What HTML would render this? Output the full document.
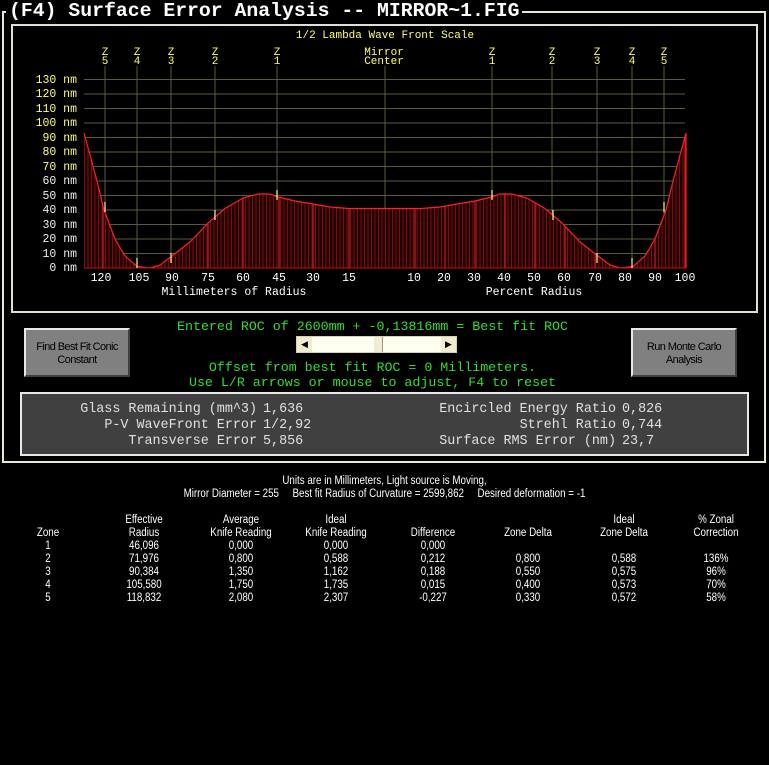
<!DOCTYPE html>
<html><head><meta charset="utf-8">
<style>
html,body{margin:0;padding:0;background:#000;width:769px;height:765px;overflow:hidden;position:relative}
.a{position:absolute;white-space:nowrap}
.mono{font-family:"Liberation Mono",monospace}
.btn{position:absolute;background:#808080;border:2px solid #e8e8e8;border-right-color:#404040;border-bottom-color:#404040;box-sizing:border-box;color:#000;font-family:"Liberation Sans",sans-serif;font-size:11px;text-align:center;line-height:13px;letter-spacing:-0.6px}
.g{color:#33dd33}
.st{color:#e0e0e0;font-family:"Liberation Mono",monospace;font-size:13.4px}
.t{font-family:"Liberation Sans",sans-serif;font-size:11.5px;color:#fff;position:absolute;text-align:center;transform:scaleX(0.85);white-space:nowrap}
</style></head><body>
<div class="a" style="left:2px;top:11px;width:764px;height:452px;border:2px solid #e8e8d8;box-sizing:border-box"></div>
<div class="a mono" style="left:6px;top:0px;background:#000;color:#fff;font-weight:bold;font-size:19.8px;line-height:22px;padding:0 3px">(F4) Surface Error Analysis -- MIRROR~1.FIG</div>
<div class="a" style="left:11px;top:24px;width:747px;height:289px;border:2px solid #e0e0d0;box-sizing:border-box"></div>
<svg class="a" style="left:0;top:0" width="769" height="320" xmlns="http://www.w3.org/2000/svg">
<defs>
<pattern id="h" x="84" y="0" width="3.5" height="10" patternUnits="userSpaceOnUse">
<rect width="3.5" height="10" fill="#200000"/><rect width="1" height="10" fill="#781010"/>
</pattern>
<clipPath id="c"><path d="M84,133 L97,181 L104,210 L115,239 L125,256 L137,266.5 L150,268 L160,265 L172,256 L190,242 L208,223 L225,208.5 L243,198 L258,194 L270,194 L278,197 L295,201 L313,204 L330,207 L349,208.5 L385,208.5 L421,208.5 L440,207 L457,204 L475,201 L492,197 L500,194 L512,194 L527,198 L545,208.5 L562,223 L580,242 L598,256 L610,265 L620,268 L633,266.5 L645,256 L655,239 L666,210 L673,181 L686,133 L686,268 L84,268 Z"/></clipPath>
</defs>
<g stroke="#5a5a40" stroke-width="1">
<line x1="84" y1="79.5" x2="685" y2="79.5"/><line x1="84" y1="94" x2="685" y2="94"/><line x1="84" y1="108.5" x2="685" y2="108.5"/><line x1="84" y1="123" x2="685" y2="123"/><line x1="84" y1="137.5" x2="685" y2="137.5"/><line x1="84" y1="152" x2="685" y2="152"/><line x1="84" y1="166.5" x2="685" y2="166.5"/><line x1="84" y1="181" x2="685" y2="181"/><line x1="84" y1="195.5" x2="685" y2="195.5"/><line x1="84" y1="210" x2="685" y2="210"/><line x1="84" y1="224.5" x2="685" y2="224.5"/><line x1="84" y1="239" x2="685" y2="239"/><line x1="84" y1="253.5" x2="685" y2="253.5"/>
<line x1="105" y1="66" x2="105" y2="268"/><line x1="137" y1="66" x2="137" y2="268"/><line x1="171" y1="66" x2="171" y2="268"/><line x1="215" y1="66" x2="215" y2="268"/><line x1="277" y1="66" x2="277" y2="268"/><line x1="385" y1="66" x2="385" y2="268"/><line x1="492" y1="66" x2="492" y2="268"/><line x1="552" y1="66" x2="552" y2="268"/><line x1="597" y1="66" x2="597" y2="268"/><line x1="632" y1="66" x2="632" y2="268"/><line x1="664" y1="66" x2="664" y2="268"/>
</g>
<rect x="84" y="120" width="602" height="149" fill="url(#h)" clip-path="url(#c)"/>
<g stroke="#c01818" stroke-width="1.3" clip-path="url(#c)">
<line x1="103" y1="120" x2="103" y2="268"/><line x1="208" y1="120" x2="208" y2="268"/><line x1="243" y1="120" x2="243" y2="268"/><line x1="279" y1="120" x2="279" y2="268"/><line x1="313" y1="120" x2="313" y2="268"/><line x1="349" y1="120" x2="349" y2="268"/>
<line x1="415" y1="120" x2="415" y2="268"/><line x1="445" y1="120" x2="445" y2="268"/><line x1="475" y1="120" x2="475" y2="268"/><line x1="505" y1="120" x2="505" y2="268"/><line x1="535" y1="120" x2="535" y2="268"/><line x1="565" y1="120" x2="565" y2="268"/><line x1="595" y1="120" x2="595" y2="268"/><line x1="625" y1="120" x2="625" y2="268"/><line x1="655" y1="120" x2="655" y2="268"/><line x1="685" y1="120" x2="685" y2="268"/>
</g>
<path d="M84,133 L97,181 L104,210 L115,239 L125,256 L137,266.5 L150,268 L160,265 L172,256 L190,242 L208,223 L225,208.5 L243,198 L258,194 L270,194 L278,197 L295,201 L313,204 L330,207 L349,208.5 L385,208.5 L421,208.5 L440,207 L457,204 L475,201 L492,197 L500,194 L512,194 L527,198 L545,208.5 L562,223 L580,242 L598,256 L610,265 L620,268 L633,266.5 L645,256 L655,239 L666,210 L673,181 L686,133 L686,268" fill="none" stroke="#ff2020" stroke-width="1.2"/>
<line x1="84" y1="268" x2="686" y2="268" stroke="#c01010"/>
<g stroke="#ffff90" stroke-width="1.2">
<line x1="105" y1="202" x2="105" y2="212"/><line x1="137" y1="258" x2="137" y2="268"/><line x1="171" y1="253" x2="171" y2="263"/><line x1="215" y1="210" x2="215" y2="220"/><line x1="277" y1="190" x2="277" y2="200"/>
<line x1="492" y1="190" x2="492" y2="200"/><line x1="553" y1="210" x2="553" y2="220"/><line x1="597" y1="253" x2="597" y2="263"/><line x1="632" y1="258" x2="632" y2="268"/><line x1="664" y1="202" x2="664" y2="212"/>
</g>
<g font-family="Liberation Mono, monospace" font-size="11" fill="#ffff70" text-anchor="middle">
<text x="385" y="38">1/2 Lambda Wave Front Scale</text>
<text x="105" y="55">Z</text><text x="105" y="64">5</text>
<text x="137" y="55">Z</text><text x="137" y="64">4</text>
<text x="171" y="55">Z</text><text x="171" y="64">3</text>
<text x="215" y="55">Z</text><text x="215" y="64">2</text>
<text x="277" y="55">Z</text><text x="277" y="64">1</text>
<text x="384" y="55">Mirror</text><text x="384" y="64">Center</text>
<text x="492" y="55">Z</text><text x="492" y="64">1</text>
<text x="552" y="55">Z</text><text x="552" y="64">2</text>
<text x="597" y="55">Z</text><text x="597" y="64">3</text>
<text x="632" y="55">Z</text><text x="632" y="64">4</text>
<text x="664" y="55">Z</text><text x="664" y="64">5</text>
</g>
<g font-family="Liberation Mono, monospace" font-size="11.5" fill="#ffff70" text-anchor="end">
<text x="77" y="83">130 nm</text><text x="77" y="97">120 nm</text><text x="77" y="112">110 nm</text><text x="77" y="126">100 nm</text><text x="77" y="141">90 nm</text><text x="77" y="155">80 nm</text><text x="77" y="170">70 nm</text>
</g>
<g font-family="Liberation Mono, monospace" font-size="11.5" fill="#f0f0f0" text-anchor="end">
<text x="77" y="184">60 nm</text><text x="77" y="199">50 nm</text><text x="77" y="213">40 nm</text><text x="77" y="228">30 nm</text><text x="77" y="242">20 nm</text><text x="77" y="257">10 nm</text><text x="77" y="271">0 nm</text>
</g>
<g font-family="Liberation Mono, monospace" font-size="11.5" fill="#ffffff" text-anchor="middle">
<text x="101" y="281">120</text><text x="139" y="281">105</text><text x="172" y="281">90</text><text x="208" y="281">75</text><text x="243" y="281">60</text><text x="279" y="281">45</text><text x="313" y="281">30</text><text x="349" y="281">15</text>
<text x="414" y="281">10</text><text x="444" y="281">20</text><text x="474" y="281">30</text><text x="504" y="281">40</text><text x="534" y="281">50</text><text x="564" y="281">60</text><text x="595" y="281">70</text><text x="625" y="281">80</text><text x="655" y="281">90</text><text x="685" y="281">100</text>
<text x="234" y="295">Millimeters of Radius</text><text x="534" y="295">Percent Radius</text>
</g>
</svg>
<div class="btn" style="left:24px;top:328px;width:106px;height:49px;padding-top:11px">Find Best Fit Conic<br>Constant</div>
<div class="btn" style="left:631px;top:328px;width:106px;height:49px;padding-top:11px">Run Monte Carlo<br>Analysis</div>
<div class="a mono g" style="left:0;width:745px;text-align:center;top:319px;font-size:13.3px">Entered ROC of 2600mm + -0,13816mm = Best fit ROC</div>
<div class="a" style="left:296px;top:336px;width:161px;height:17px;background:#fffff0;border:1px solid #d8d0b0;box-sizing:border-box"></div>
<div class="a" style="left:297px;top:337px;width:15px;height:15px;background:#f0ecd0;color:#000;font-size:9px;text-align:center;line-height:15px">&#9664;</div>
<div class="a" style="left:441px;top:337px;width:15px;height:15px;background:#f0ecd0;color:#000;font-size:9px;text-align:center;line-height:15px">&#9654;</div>
<div class="a" style="left:373px;top:337px;width:8px;height:15px;background:#f0ecd0;border-left:1px solid #fff;border-right:1px solid #a09880"></div>
<div class="a mono g" style="left:0;width:745px;text-align:center;top:360px;font-size:13.3px">Offset from best fit ROC = 0 Millimeters.</div>
<div class="a mono g" style="left:0;width:745px;text-align:center;top:375px;font-size:13.3px">Use L/R arrows or mouse to adjust, F4 to reset</div>
<div class="a" style="left:20px;top:392px;width:729px;height:64px;background:#404040;border:2px solid #e8e8e8;box-sizing:border-box"></div>
<div class="a st" style="right:512px;top:402px">Glass Remaining (mm^3)</div><div class="a st g" style="left:263px;top:402px">1,636</div>
<div class="a st" style="right:512px;top:418px">P-V WaveFront Error</div><div class="a st g" style="left:263px;top:418px">1/2,92</div>
<div class="a st" style="right:512px;top:434px">Transverse Error</div><div class="a st g" style="left:263px;top:434px">5,856</div>
<div class="a st" style="right:153px;top:402px">Encircled Energy Ratio</div><div class="a st g" style="left:622px;top:402px">0,826</div>
<div class="a st" style="right:153px;top:418px">Strehl Ratio</div><div class="a st g" style="left:622px;top:418px">0,744</div>
<div class="a st" style="right:153px;top:434px">Surface RMS Error (nm)</div><div class="a st g" style="left:622px;top:434px">23,7</div>
<div class="t" style="left:0;width:769px;top:475px">Units are in Millimeters, Light source is Moving,</div>
<div class="t" style="left:0;width:769px;top:488px">Mirror Diameter = 255 &nbsp;&nbsp;&nbsp; Best fit Radius of Curvature = 2599,862 &nbsp;&nbsp;&nbsp; Desired deformation = -1</div>
<div class="t" style="left:8px;width:80px;top:514px;line-height:13px"><br>Zone<br>1<br>2<br>3<br>4<br>5</div>
<div class="t" style="left:104px;width:80px;top:514px;line-height:13px">Effective<br>Radius<br>46,096<br>71,976<br>90,384<br>105,580<br>118,832</div>
<div class="t" style="left:196px;width:90px;top:514px;line-height:13px">Average<br>Knife Reading<br>0,000<br>0,800<br>1,350<br>1,750<br>2,080</div>
<div class="t" style="left:291px;width:90px;top:514px;line-height:13px">Ideal<br>Knife Reading<br>0,000<br>0,588<br>1,162<br>1,735<br>2,307</div>
<div class="t" style="left:393px;width:80px;top:514px;line-height:13px"><br>Difference<br>0,000<br>0,212<br>0,188<br>0,015<br>-0,227</div>
<div class="t" style="left:488px;width:80px;top:514px;line-height:13px"><br>Zone Delta<br><br>0,800<br>0,550<br>0,400<br>0,330</div>
<div class="t" style="left:584px;width:80px;top:514px;line-height:13px">Ideal<br>Zone Delta<br><br>0,588<br>0,575<br>0,573<br>0,572</div>
<div class="t" style="left:676px;width:80px;top:514px;line-height:13px">% Zonal<br>Correction<br><br>136%<br>96%<br>70%<br>58%</div>
</body></html>
